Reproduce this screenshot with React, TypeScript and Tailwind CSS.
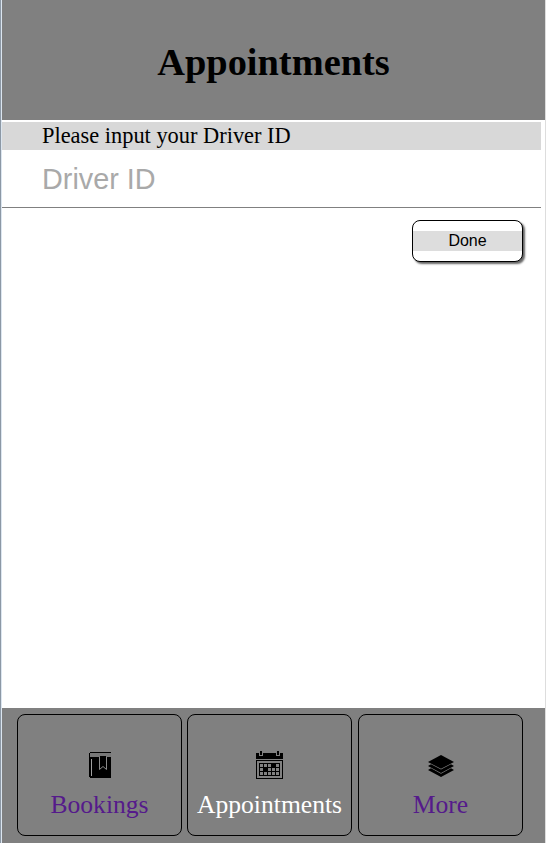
import type { ReactNode } from "react";

function BookIcon() {
  return (
    <svg width="22" height="26" viewBox="0 0 22 26" shapeRendering="crispEdges">
      <path d="M1 0h21v1H1v3h21v22H1l-1-1V1z" fill="#000" />
      <path d="M1 1h21v4H1z" fill="#777" />
      <path d="M2 7h1v17H2z" fill="#a0a0a0" />
      <path d="M11 4h6v12l-3-2-3 2z" fill="#000" />
      <path d="M10.5 5v12.5l3.5-3 3.5 3V5" fill="none" stroke="#8a8a8a" shapeRendering="auto" />
    </svg>
  );
}

function CalendarIcon() {
  return (
    <svg width="27" height="28" viewBox="0 0 27 28" shapeRendering="crispEdges">
      <path d="M0 2h3v3h4V2h13v3h4V2h3v6H0zM4 0h2v4H4zM21 0h2v4h-2z" />
      <path d="M.5 9.5h26v18H.5z" fill="none" stroke="#000" />
      <path d="M3.5 12.5h20v12h-20zM3.5 16.5h20M3.5 20.5h20M7.5 12.5v12M11.5 12.5v12M15.5 12.5v12M19.5 12.5v12" fill="none" stroke="#000" />
      <path d="M15 12h5v5h-5zM7 16h5v5H7z" />
    </svg>
  );
}

function LayersIcon() {
  return (
    <svg width="26" height="22" viewBox="0 0 26 22">
      <path d="M13 0l13 7-13 6.8L0 7z" />
      <path d="M0 11l3-1.8 10 5.4 10-5.4 3 1.8-13 6.9z" />
      <path d="M0 15.1l3-1.8 10 5.4 10-5.4 3 1.8L13 22z" />
    </svg>
  );
}

function NavItem({ label, color, iconBox, children }: { label: string; color: string; iconBox: string; children: ReactNode }) {
  return (
    <a className={`flex h-[122px] w-[165px] flex-col items-center rounded-[8px] border border-black ${color}`}>
      <div className={`flex h-[75px] w-full justify-center ${iconBox}`}>{children}</div>
      <span className="text-[25.6px] leading-[30px]">{label}</span>
    </a>
  );
}

export default function App() {
  return (
    <div className="flex h-[843px] w-[546px] flex-col border-r border-[#dddddd] bg-white font-['Liberation_Serif',serif]">
      <div className="flex h-full flex-col border-l border-[#8c98a5]">
        <div className="flex h-full flex-col border-l border-[#dce6f0]">
          <header className="flex h-[120px] shrink-0 items-center justify-center bg-[#808080] pt-[4px]">
            <h1 className="text-[38.4px] font-bold leading-[44px] text-black">Appointments</h1>
          </header>
          <main className="mr-1 flex flex-1 flex-col pt-[2px]">
            <label className="h-[28px] bg-[#d8d8d8] pl-10 text-[22.4px] leading-[27px] text-black">Please input your Driver ID</label>
            <input
              placeholder="Driver ID"
              className="h-[58px] border-b border-[#808080] pl-10 pt-[2px] font-['Liberation_Sans',sans-serif] text-[28.8px] outline-none placeholder:text-[#a9a9a9]"
            />
            <button className="mr-[18px] mt-[12px] flex h-[42px] w-[111px] flex-col justify-center self-end rounded-[8px] border border-black bg-white font-['Liberation_Sans',sans-serif] text-[16px] text-black shadow-[2px_2px_2px_#666]">
              <span className="h-5 w-full bg-[#dddddd] leading-[19px]">Done</span>
            </button>
          </main>
          <nav className="flex h-[135px] shrink-0 bg-[#808080] pl-[15px] pt-[6px]">
            <div className="flex gap-[5px]">
              <NavItem label="Bookings" color="text-[#551a8b]" iconBox="pt-[37px]"><BookIcon /></NavItem>
              <NavItem label="Appointments" color="text-white" iconBox="pt-[36px]"><CalendarIcon /></NavItem>
              <div className="pl-px">
                <NavItem label="More" color="text-[#551a8b]" iconBox="pt-[40px]"><LayersIcon /></NavItem>
              </div>
            </div>
          </nav>
        </div>
      </div>
    </div>
  );
}
